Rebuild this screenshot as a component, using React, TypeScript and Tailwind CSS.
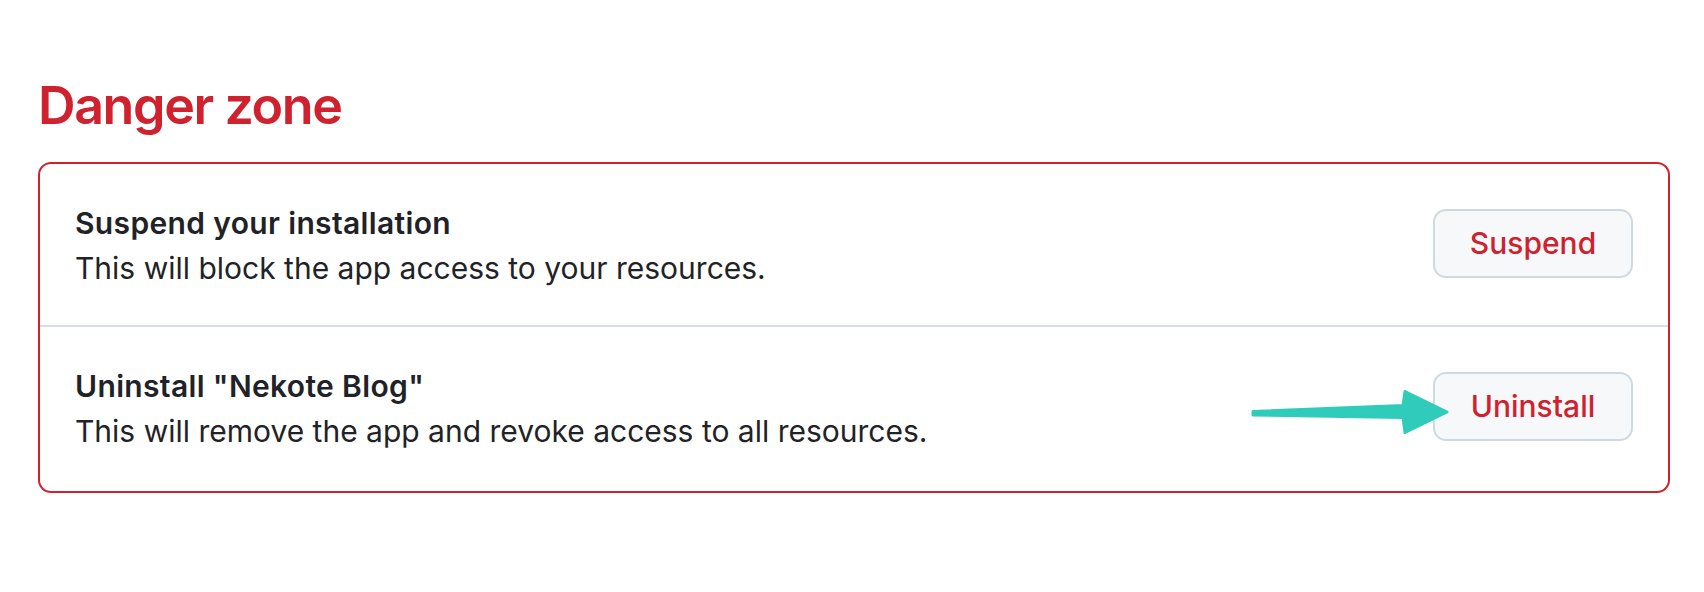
import React from "react";

const ROWS = [
  {
    title: "Suspend your installation",
    body: "This will block the app access to your resources.",
    action: "Suspend",
  },
  {
    title: 'Uninstall "Nekote Blog"',
    body: "This will remove the app and revoke access to all resources.",
    action: "Uninstall",
  },
];

// Teal callout arrow pointing at the Uninstall button
const Arrow = () => (
  <svg
    className="pointer-events-none absolute left-[1245px] top-[386px]"
    width="212"
    height="56"
    viewBox="0 0 212 56"
  >
    <path
      d="M8 25.5 L158 19.5 L160 5.5 L202 26 L160 46.5 L158 31.5 L8 29 Z"
      fill="#2fcbbb"
      stroke="#2fcbbb"
      strokeWidth="3"
      strokeLinejoin="round"
    />
  </svg>
);

export default function App() {
  return (
    <div className="relative min-h-[592px] bg-white font-['Inter','Liberation_Sans',sans-serif] text-[#1f2328]">
      <div className="pl-[38px] pr-[34px] pt-[67px]">
        <h2 className="mb-[17px] text-[52px] font-semibold leading-[78px] tracking-[-1.4px] text-[#cf222e]">
          Danger zone
        </h2>
        <div className="overflow-hidden rounded-[13px] border-2 border-[#cf222e]">
          {ROWS.map((row, i) => (
            <div
              key={row.action}
              className={`flex items-center justify-between px-[35px] pt-[37px] ${
                i > 0 ? "border-t-2 border-[#d8dee4] pb-[37px]" : "pb-[34px]"
              }`}
            >
              <div>
                <div className="text-[30px] font-semibold leading-[45px] tracking-[0.35px]">
                  {row.title}
                </div>
                <div className="text-[30px] leading-[45px]">{row.body}</div>
              </div>
              <button
                type="button"
                className="-mt-[6px] flex h-[69px] w-[200px] items-center justify-center rounded-[13px] border-2 border-[#d1d9e0] bg-[#f6f8fa] text-[30px] font-medium text-[#cf222e]"
              >
                {row.action}
              </button>
            </div>
          ))}
        </div>
      </div>
      <Arrow />
    </div>
  );
}
